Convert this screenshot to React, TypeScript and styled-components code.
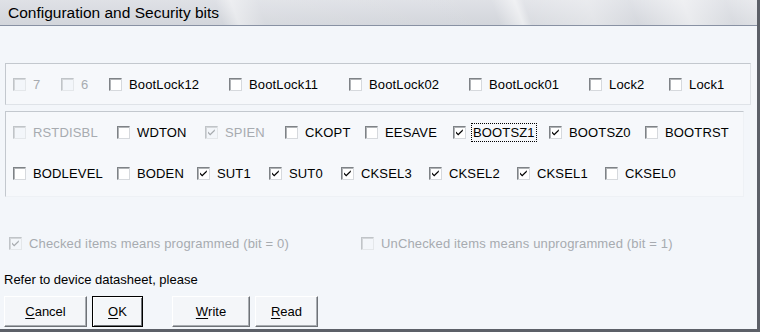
import React from 'react';
import styled, { createGlobalStyle } from 'styled-components';

type Bit = {
  label: string;
  width: number;
  checked?: boolean;
  disabled?: boolean;
  focused?: boolean;
};

const lockBits: Bit[] = [
  { label: '7', width: 48, disabled: true },
  { label: '6', width: 48, disabled: true },
  { label: 'BootLock12', width: 120 },
  { label: 'BootLock11', width: 120 },
  { label: 'BootLock02', width: 120 },
  { label: 'BootLock01', width: 120 },
  { label: 'Lock2', width: 80 },
  { label: 'Lock1', width: 80 },
];

const highBits: Bit[] = [
  { label: 'RSTDISBL', width: 104, disabled: true },
  { label: 'WDTON', width: 88 },
  { label: 'SPIEN', width: 80, checked: true, disabled: true },
  { label: 'CKOPT', width: 80 },
  { label: 'EESAVE', width: 88 },
  { label: 'BOOTSZ1', width: 96, checked: true, focused: true },
  { label: 'BOOTSZ0', width: 96, checked: true },
  { label: 'BOOTRST', width: 96 },
];

const lowBits: Bit[] = [
  { label: 'BODLEVEL', width: 104 },
  { label: 'BODEN', width: 80 },
  { label: 'SUT1', width: 72, checked: true },
  { label: 'SUT0', width: 72, checked: true },
  { label: 'CKSEL3', width: 88, checked: true },
  { label: 'CKSEL2', width: 88, checked: true },
  { label: 'CKSEL1', width: 88, checked: true },
  { label: 'CKSEL0', width: 88 },
];

const CheckBox: React.FC<{ checked?: boolean; disabled?: boolean }> = ({ checked, disabled }) => (
  <Box $disabled={disabled}>
    {checked && (
      <svg width="11" height="11" viewBox="0 0 11 11">
        <path
          d="M2 4.5 L4.2 6.8 L8.8 2.2 L8.8 4 L4.2 8.6 L2 6.3 Z"
          fill={disabled ? '#a6aaae' : '#000'}
        />
      </svg>
    )}
  </Box>
);

const BitItem: React.FC<{ bit: Bit }> = ({ bit }) => (
  <Item $width={bit.width}>
    <CheckBox checked={bit.checked} disabled={bit.disabled} />
    <Label $disabled={bit.disabled} $focused={bit.focused}>
      {bit.label}
    </Label>
  </Item>
);

const App: React.FC = () => {
  return (
    <Window>
      <GlobalStyle />
      <TitleBar>Configuration and Security bits</TitleBar>
      <Body>
        <GroupBox $width={746} $top={37}>
          <BitRow>
            {lockBits.map((b) => (
              <BitItem key={b.label} bit={b} />
            ))}
          </BitRow>
        </GroupBox>
        <GroupBox $width={739} $top={6} $faint>
          <FuseRows>
            <BitRow>
              {highBits.map((b) => (
                <BitItem key={b.label} bit={b} />
              ))}
            </BitRow>
            <BitRow>
              {lowBits.map((b) => (
                <BitItem key={b.label} bit={b} />
              ))}
            </BitRow>
          </FuseRows>
        </GroupBox>
        <LegendRow>
          <Item $width={352}>
            <CheckBox checked disabled />
            <Label $disabled>Checked items means programmed (bit = 0)</Label>
          </Item>
          <Item $width={360}>
            <CheckBox disabled />
            <Label $disabled>UnChecked items means unprogrammed (bit = 1)</Label>
          </Item>
        </LegendRow>
        <Note>Refer to device datasheet, please</Note>
        <ButtonRow>
          <Button $width={83}>
            <u>C</u>ancel
          </Button>
          <Button $width={51} $default>
            <u>O</u>K
          </Button>
          <Spacer />
          <Button $width={78}>
            <u>W</u>rite
          </Button>
          <Button $width={63}>
            <u>R</u>ead
          </Button>
        </ButtonRow>
      </Body>
    </Window>
  );
};
export default App;

const GlobalStyle = createGlobalStyle`
  html, body {
    margin: 0;
    padding: 0;
    background: #f3f6fa;
  }
`;

const Window = styled.div`
  width: 760px;
  height: 332px;
  box-sizing: border-box;
  display: flex;
  flex-direction: column;
  background: #f3f6fa;
  border-right: 3px solid #5c6068;
  border-bottom: 3px solid #5c6068;
  font-family: 'Liberation Sans', Arial, sans-serif;
  font-size: 13px;
  color: #000;
  overflow: hidden;
`;

const TitleBar = styled.div`
  height: 26px;
  flex: none;
  box-sizing: border-box;
  padding-left: 8px;
  display: flex;
  align-items: center;
  font-size: 15.5px;
  border-bottom: 1px solid #8891a3;
  background:
    linear-gradient(
      70deg,
      rgba(255, 255, 255, 0) 0px,
      rgba(255, 255, 255, 0) 210px,
      rgba(255, 255, 255, 0.45) 225px,
      rgba(255, 255, 255, 0.1) 250px,
      rgba(255, 255, 255, 0) 470px,
      rgba(255, 255, 255, 0.55) 492px,
      rgba(255, 255, 255, 0.15) 500px,
      rgba(255, 255, 255, 0.35) 560px,
      rgba(255, 255, 255, 0.05) 600px,
      rgba(255, 255, 255, 0.5) 650px,
      rgba(255, 255, 255, 0.1) 690px,
      rgba(255, 255, 255, 0.4) 730px
    ),
    linear-gradient(180deg, #dfe1e6 0%, #d2d5db 100%);
`;

const Body = styled.div`
  display: flex;
  flex-direction: column;
  padding-left: 4px;
`;

const GroupBox = styled.div<{ $width: number; $top: number; $faint?: boolean }>`
  width: ${(p) => p.$width}px;
  margin-top: ${(p) => p.$top}px;
  margin-left: 1px;
  box-sizing: border-box;
  border: 1px solid #c3c8ce;
  border-right-color: ${(p) => (p.$faint ? '#eef1f5' : '#dfe3e8')};
  border-bottom-color: ${(p) => (p.$faint ? '#eef1f5' : '#dfe3e8')};
  background: #f6f8fb;
  padding-left: 7px;
`;

const FuseRows = styled.div`
  display: flex;
  flex-direction: column;
  gap: 17px;
  padding: 8px 0 11px;
`;

const BitRow = styled.div`
  display: flex;
  align-items: center;
  height: 40px;

  ${FuseRows} & {
    height: 24px;
  }
`;

const Item = styled.div<{ $width: number }>`
  width: ${(p) => p.$width}px;
  flex: none;
  display: flex;
  align-items: center;
  white-space: nowrap;
`;

const Box = styled.span<{ $disabled?: boolean }>`
  width: 13px;
  height: 13px;
  flex: none;
  box-sizing: border-box;
  display: flex;
  align-items: center;
  justify-content: center;
  border: 1px solid ${(p) => (p.$disabled ? '#c0c4c8' : '#7e8286')};
  border-right-color: ${(p) => (p.$disabled ? '#e4e7ea' : '#d6d9dd')};
  border-bottom-color: ${(p) => (p.$disabled ? '#e4e7ea' : '#d6d9dd')};
  box-shadow: inset 1px 1px 0 ${(p) => (p.$disabled ? '#d4d7da' : '#b0b3b6')};
  background: ${(p) => (p.$disabled ? '#f3f6fa' : '#ffffff')};
`;

const Label = styled.span<{ $disabled?: boolean; $focused?: boolean }>`
  margin-left: 6px;
  padding: 1px 1px;
  color: ${(p) => (p.$disabled ? '#a7abb0' : '#000')};
  outline: ${(p) => (p.$focused ? '1px dotted #000' : 'none')};
  line-height: 15px;
  letter-spacing: 0.15px;
`;

const LegendRow = styled.div`
  display: flex;
  align-items: center;
  height: 20px;
  margin-top: 36px;
  padding-left: 5px;
`;

const Note = styled.div`
  margin-top: 19px;
  height: 16px;
  line-height: 16px;
`;

const ButtonRow = styled.div`
  display: flex;
  gap: 5px;
  margin-top: 8px;
`;

const Spacer = styled.div`
  width: 19px;
`;

const Button = styled.div<{ $width: number; $default?: boolean }>`
  width: ${(p) => p.$width}px;
  height: 31px;
  box-sizing: border-box;
  display: flex;
  align-items: center;
  justify-content: center;
  background: #f4f6f9;
  border: 1px solid #ffffff;
  border-right-color: #6e7277;
  border-bottom-color: #6e7277;
  box-shadow: inset -1px -1px 0 #a9adb2;
  ${(p) =>
    p.$default
      ? 'border: 1px solid #000; box-shadow: inset 1px 1px 0 #fff, inset -1px -1px 0 #6e7277;'
      : ''}

  u {
    text-decoration: underline;
    text-underline-offset: 2px;
  }
`;
